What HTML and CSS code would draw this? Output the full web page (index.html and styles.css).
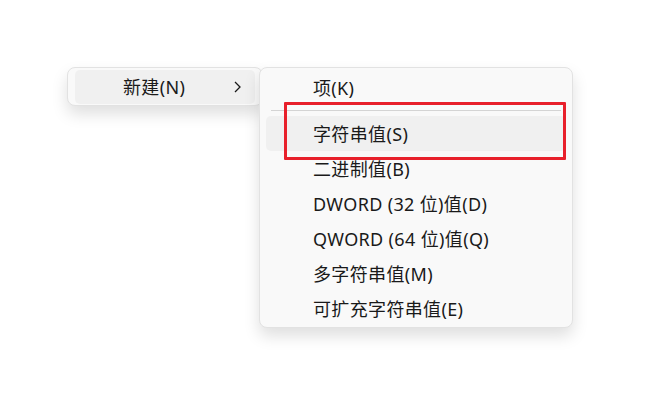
FILE: index.html
```html
<!DOCTYPE html>
<html lang="zh-CN">
<head>
<meta charset="utf-8">
<link rel="stylesheet" href="styles.css">
</head>
<body>
<div class="stage">
  <div class="menu menu-main">
    <div class="item item-active">
      <span class="label">新建(N)</span>
      <svg class="chevron" width="7" height="12" viewBox="0 0 7 12"><path d="M1 1 L6 6 L1 11" fill="none" stroke="#1a1a1a" stroke-width="1.3"/></svg>
    </div>
  </div>
  <div class="menu menu-sub">
    <div class="item"><span class="label">项(K)</span></div>
    <div class="sep"></div>
    <div class="item item-active"><span class="label">字符串值(S)</span></div>
    <div class="item"><span class="label">二进制值(B)</span></div>
    <div class="item"><span class="label">DWORD (32 位)值(D)</span></div>
    <div class="item"><span class="label">QWORD (64 位)值(Q)</span></div>
    <div class="item"><span class="label">多字符串值(M)</span></div>
    <div class="item"><span class="label">可扩充字符串值(E)</span></div>
    <div class="mark"></div>
  </div>
</div>
</body>
</html>
```

FILE: styles.css
```css
html, body {
  margin: 0;
  padding: 0;
  background: #ffffff;
}
body {
  width: 648px;
  height: 406px;
  overflow: hidden;
  font-family: "Noto Sans", "Noto Sans CJK SC", sans-serif;
  font-size: 18px;
  letter-spacing: 0.35px;
  color: #1a1a1a;
}
.stage {
  display: flex;
  align-items: flex-start;
  padding: 67px 0 0 67px;
}
.menu {
  background: #f9f9f9;
  border: 1px solid #e2e2e2;
  border-radius: 8px;
  box-shadow: 0 8px 16px rgba(0, 0, 0, 0.13);
  box-sizing: border-box;
}
.menu-main {
  width: 196px;
  height: 39px;
  padding: 2px 7px 0 7px;
}
.menu-sub {
  position: relative;
  z-index: 1;
  margin-left: -4px;
  width: 314px;
  height: 261px;
  padding: 2px 6px 0 6px;
}
.item {
  display: flex;
  align-items: center;
  justify-content: space-between;
  height: 35px;
  padding: 0 14px 0 47px;
  border-radius: 5px;
  line-height: 1;
}
.item-active {
  background: #f0f0f0;
}
.menu-main .item {
  height: 34px;
  padding-left: 48px;
}
.chevron {
  display: block;
}
.sep {
  height: 1px;
  background: #d4d4d4;
  margin: 5px 5px 5px 5px;
}
.mark {
  position: absolute;
  left: 24px;
  top: 34px;
  width: 282px;
  height: 58px;
  border: 3px solid #e8202b;
  box-sizing: border-box;
  border-radius: 1px;
}
```
